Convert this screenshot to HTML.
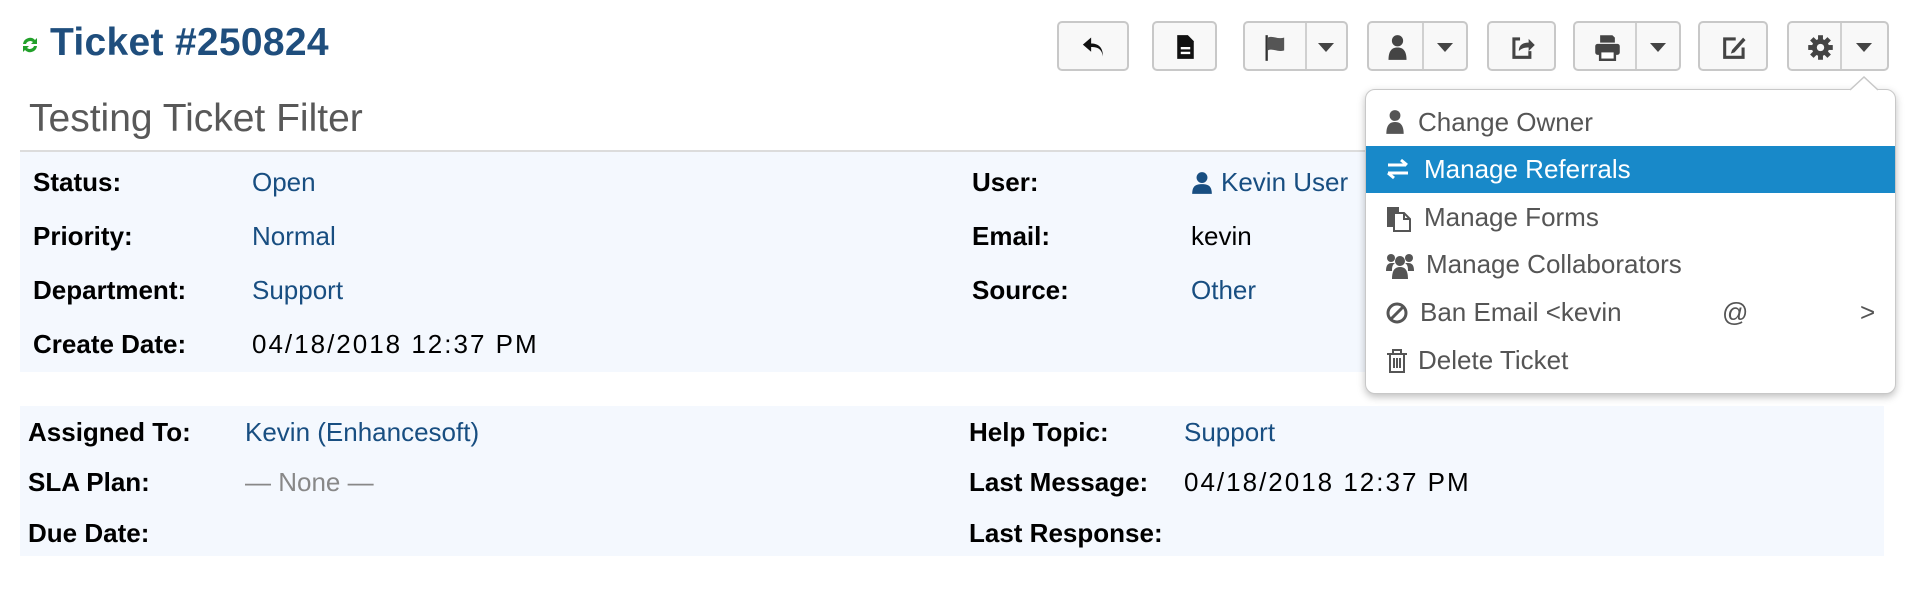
<!DOCTYPE html>
<html><head><meta charset="utf-8"><style>
*{margin:0;padding:0;box-sizing:border-box}
body{width:1920px;height:590px;background:#fff;font-family:"Liberation Sans",sans-serif;position:relative;overflow:hidden;color:#000}
.a{position:absolute;white-space:nowrap}
.t{font-size:26px;line-height:30px}
.b{font-weight:bold}
.l{color:#184e81}
.d{letter-spacing:2px}
.btn{position:absolute;top:21px;height:50px;border:2px solid #c8c8c8;border-radius:5px;background:#f8f8f8}
.dv{position:absolute;top:0;bottom:0;width:2px;background:#d0d0d0}
.car{position:absolute;top:20px;width:0;height:0;border-left:8px solid transparent;border-right:8px solid transparent;border-top:9px solid #444}
.ic{position:absolute;top:11px}
.mi{position:absolute;left:0;right:0;height:47px;font-size:26px;color:#555;line-height:47px}
.mi span{position:absolute;left:58px}
.mi svg{position:absolute;left:20px;top:12px}
</style></head><body>
<svg class="a" style="left:20px;top:35px" width="20" height="20" viewBox="0 0 20 20"><path d="M3 9a7 7 0 0 1 12-4l2-2v6h-6l2-2a4.5 4.5 0 0 0-7 2z M17 11a7 7 0 0 1-12 4l-2 2v-6h6l-2 2a4.5 4.5 0 0 0 7-2z" fill="#22a02a"/></svg>
<div class="a b" style="left:50px;top:21px;font-size:39px;line-height:44px;color:#1f4e7d;letter-spacing:0.3px">Ticket #250824</div>
<div class="a" style="left:29px;top:97px;font-size:39px;line-height:44px;color:#585858">Testing Ticket Filter</div>
<div class="a" style="left:20px;top:150px;width:1864px;height:2px;background:#dcdcdc"></div>
<div class="a" style="left:20px;top:152px;width:1864px;height:220px;background:#f4f8fe"></div>
<div class="a" style="left:20px;top:406px;width:1864px;height:150px;background:#f4f8fe"></div>

<div class="a t b" style="left:33px;top:167px">Status:</div><div class="a t l" style="left:252px;top:167px">Open</div>
<div class="a t b" style="left:33px;top:221px">Priority:</div><div class="a t l" style="left:252px;top:221px">Normal</div>
<div class="a t b" style="left:33px;top:275px">Department:</div><div class="a t l" style="left:252px;top:275px">Support</div>
<div class="a t b" style="left:33px;top:329px">Create Date:</div><div class="a t d" style="left:252px;top:329px">04/18/2018 12:37 PM</div>
<div class="a t b" style="left:972px;top:167px">User:</div>
<svg class="a" style="left:1191px;top:171px" width="22" height="24" viewBox="0 0 20 22"><circle cx="10" cy="6" r="5" fill="#184e81"/><path d="M1 21c0-7 3-9 9-9s9 2 9 9z" fill="#184e81"/></svg>
<div class="a t l" style="left:1221px;top:167px">Kevin User</div>
<div class="a t b" style="left:972px;top:221px">Email:</div><div class="a t" style="left:1191px;top:221px">kevin</div>
<div class="a t b" style="left:972px;top:275px">Source:</div><div class="a t l" style="left:1191px;top:275px">Other</div>

<div class="a t b" style="left:28px;top:417px">Assigned To:</div><div class="a t l" style="left:245px;top:417px">Kevin (Enhancesoft)</div>
<div class="a t b" style="left:28px;top:467px">SLA Plan:</div><div class="a t" style="left:245px;top:467px;color:#888">— None —</div>
<div class="a t b" style="left:28px;top:518px">Due Date:</div>
<div class="a t b" style="left:969px;top:417px">Help Topic:</div><div class="a t l" style="left:1184px;top:417px">Support</div>
<div class="a t b" style="left:969px;top:467px">Last Message:</div><div class="a t d" style="left:1184px;top:467px">04/18/2018 12:37 PM</div>
<div class="a t b" style="left:969px;top:518px">Last Response:</div>

<div class="btn" style="left:1057px;width:72px"><svg class="ic" style="left:21px" width="27" height="26" viewBox="0 0 22 22"><path d="M9 3 2 9l7 6v-4c6 0 9 2 10 8 0-8-4-11-10-11z" fill="#111"/></svg></div>
<div class="btn" style="left:1152px;width:65px"><svg class="ic" style="left:22px" width="19" height="26" viewBox="0 0 16 22"><path d="M1 1h9l5 5v15H1z" fill="#111"/><path d="M4 12h8M4 16h8" stroke="#fff" stroke-width="2"/></svg></div>
<div class="btn" style="left:1243px;width:105px"><svg class="ic" style="left:19px" width="24" height="28" viewBox="0 0 20 24"><path d="M2 1v22" stroke="#333" stroke-width="2"/><path d="M3 3c5-2 8 2 14 0v11c-6 2-9-2-14 0z" fill="#555"/></svg><div class="dv" style="left:60px"></div><div class="car" style="left:73px"></div></div>
<div class="btn" style="left:1367px;width:101px"><svg class="ic" style="left:19px" width="19" height="27" viewBox="0 0 16 24"><circle cx="8" cy="6" r="5" fill="#444"/><path d="M0 23c0-8 3-11 8-11s8 3 8 11z" fill="#444"/></svg><div class="dv" style="left:53px"></div><div class="car" style="left:68px"></div></div>
<div class="btn" style="left:1487px;width:69px"><svg class="ic" style="left:20px" width="27" height="27" viewBox="0 0 22 22"><path d="M9 4H4v15h13v-5" fill="none" stroke="#444" stroke-width="2.5"/><path d="M8 14c0-5 3-7 8-7V4l5 5-5 5v-3c-4 0-6 1-8 3z" fill="#444"/></svg></div>
<div class="btn" style="left:1573px;width:108px"><svg class="ic" style="left:19px" width="27" height="27" viewBox="0 0 22 22"><path d="M5 1h10l2 2v4H5z" fill="#444"/><rect x="1" y="8" width="20" height="9" rx="2" fill="#444"/><rect x="5" y="14" width="12" height="7" fill="#fff" stroke="#444" stroke-width="2"/></svg><div class="dv" style="left:60px"></div><div class="car" style="left:75px"></div></div>
<div class="btn" style="left:1698px;width:70px"><svg class="ic" style="left:21px" width="27" height="27" viewBox="0 0 22 22"><path d="M12 4H3v15h15v-8" fill="none" stroke="#444" stroke-width="2.5"/><path d="M9 13l9-10 2 2-9 10-3 1z" fill="#444"/></svg></div>
<div class="btn" style="left:1787px;width:102px"><svg class="ic" style="left:18px" width="27" height="27" viewBox="0 0 22 22"><g fill="#444"><circle cx="11" cy="11" r="7"/><rect x="9" y="1" width="4" height="20"/><rect x="1" y="9" width="20" height="4"/><rect x="9" y="1" width="4" height="20" transform="rotate(45 11 11)"/><rect x="9" y="1" width="4" height="20" transform="rotate(-45 11 11)"/></g><circle cx="11" cy="11" r="3" fill="#f8f8f8"/></svg><div class="dv" style="left:51px"></div><div class="car" style="left:67px"></div></div>

<div class="a" style="left:1365px;top:89px;width:531px;height:305px;background:#fff;border:1px solid #c8c8c8;border-radius:10px;box-shadow:0 3px 8px rgba(0,0,0,.25)">
<div class="mi" style="top:9px"><svg width="18" height="26" viewBox="0 0 16 24" style="top:10px"><circle cx="8" cy="6" r="5" fill="#555"/><path d="M0 23c0-8 3-11 8-11s8 3 8 11z" fill="#555"/></svg><span style="left:52px">Change Owner</span></div>
<div class="mi" style="top:56px;background:#1889c9;color:#fff"><svg width="26" height="22" viewBox="0 0 26 22"><path d="M2 7h18M15 2l6 5M2 15h20M2 15l6 5" stroke="#fff" stroke-width="3" fill="none"/></svg><span>Manage Referrals</span></div>
<div class="mi" style="top:104px"><svg width="26" height="26" viewBox="0 0 26 26"><path d="M1 1h12v20H1z" fill="#555"/><path d="M8 7h10l6 6v12H8z" fill="#fff" stroke="#555" stroke-width="2"/><path d="M18 7v6h6" fill="none" stroke="#555" stroke-width="2"/></svg><span>Manage Forms</span></div>
<div class="mi" style="top:151px"><svg width="28" height="26" viewBox="0 0 28 26"><g fill="#555"><circle cx="5" cy="5" r="4"/><circle cx="23" cy="5" r="4"/><circle cx="14" cy="8" r="5"/><path d="M0 18c0-6 2-8 6-8h3c-3 2-3 5-3 8zM28 18c0-6-2-8-6-8h-3c3 2 3 5 3 8zM6 26c0-9 3-12 8-12s8 3 8 12z"/></g></svg><span style="left:60px">Manage Collaborators</span></div>
<div class="mi" style="top:199px"><svg width="24" height="24" viewBox="0 0 24 24"><circle cx="11" cy="12" r="9" fill="none" stroke="#555" stroke-width="3"/><path d="M5 18 17 6" stroke="#555" stroke-width="3"/></svg><span style="left:54px">Ban Email &lt;kevin</span><span style="left:356px">@</span><span style="left:494px">&gt;</span></div>
<div class="mi" style="top:247px"><svg width="22" height="24" viewBox="0 0 22 24"><path d="M1 5h20M7 5V1h8v4M4 5v18h14V5M8 9v10M11 9v10M14 9v10" fill="none" stroke="#555" stroke-width="2"/></svg><span style="left:52px">Delete Ticket</span></div>
</div>
<svg class="a" style="left:1850px;top:76px" width="28" height="15" viewBox="0 0 28 15"><path d="M0 14 14 1 28 14" fill="#fff" stroke="#c8c8c8" stroke-width="1.5"/></svg>
</body></html>
